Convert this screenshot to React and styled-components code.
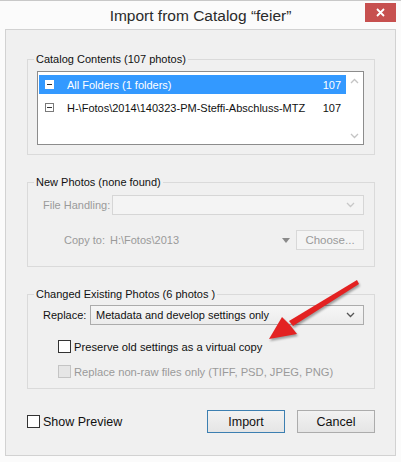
import React from "react";
import styled, { createGlobalStyle } from "styled-components";

const Global = createGlobalStyle`
    html, body {
        margin : 0;
        padding : 0;
        background : #fbfbfb;
    }
    body {
        font-family : "Liberation Sans", Arial, sans-serif;
        font-size : 11px;
        color : #000;
    }
`

const Window = styled.div`
    position : relative;
    width : 401px;
    height : 462px;
    box-sizing : border-box;
    border-top : 1px solid #c8c8c8;
    background : #fbfbfb;
    display : flex;
    flex-direction : column;
    overflow : hidden;
`

const TitleBar = styled.div`
    height : 28px;
    display : grid;
    grid-template-columns : 1fr auto 1fr;
    align-items : start;
`

const Title = styled.div`
    grid-column : 2;
    font-size : 15.5px;
    color : #2a2a2a;
    padding-top : 6px;
`

const Close = styled.div`
    grid-column : 3;
    justify-self : end;
    margin : 2px 5px 0 0;
    width : 31px;
    height : 19px;
    background : #c7504f;
    color : #fff;
    display : flex;
    align-items : center;
    justify-content : center;
`

const Client = styled.div`
    margin : 0 5px;
    height : 427px;
    box-sizing : border-box;
    border : 1px solid #d2d2d2;
    background : #f0f0f0;
    padding : 21px 20px 0 21px;
    display : flex;
    flex-direction : column;
`

const Group = styled.fieldset`
    margin : ${props => props.gap || 0}px 0 0 0;
    padding : 0 10px ${props => props.pb || 9}px 9px;
    border : 1px solid #dadada;
    min-width : 0;
`

const Legend = styled.legend`
    margin-left : -3px;
    padding : 0 2px;
    line-height : 16px;
    color : #111;
`

const ListBox = styled.div`
    margin-top : 4px;
    height : 74px;
    box-sizing : border-box;
    border : 1px solid #8c8c8c;
    background : #fff;
    display : flex;
`

const Rows = styled.div`
    flex : 1;
    min-width : 0;
    padding-top : 3px;
    display : flex;
    flex-direction : column;
    gap : 4px;
`

const Row = styled.div`
    height : 19px;
    margin-left : 1px;
    display : flex;
    align-items : center;
    background : ${props => props.selected ? "#3399ff" : "transparent"};
    color : ${props => props.selected ? "#fff" : "#111"};
    padding : 0 5px 0 6px;
`

const ToggleBox = styled.span`
    width : 9px;
    height : 9px;
    box-sizing : border-box;
    border : 1px solid ${props => props.selected ? "#fff" : "#7a7a7a"};
    background : #fff;
    display : flex;
    align-items : center;
    justify-content : center;
    margin-right : 13px;
    flex : none;
    &::after {
        content : "";
        width : 5px;
        height : 1px;
        background : #333;
    }
`

const RowLabel = styled.span`
    flex : 1;
    white-space : nowrap;
`

const Scroll = styled.div`
    width : 17px;
    flex : none;
    display : flex;
    flex-direction : column;
    justify-content : space-between;
    align-items : center;
    padding : 6px 0 5px;
`

const FieldRow = styled.div`
    display : flex;
    align-items : center;
    margin-top : ${props => props.mt || 0}px;
    padding-left : ${props => props.pl || 0}px;
    color : ${props => props.disabled ? "#9a9a9a" : "#111"};
    white-space : nowrap;
`

const FieldLabel = styled.span`
    width : ${props => props.w}px;
    flex : none;
`

const Select = styled.div`
    flex : 1;
    height : 20px;
    box-sizing : border-box;
    border : 1px solid ${props => props.disabled ? "#d6d6d6" : "#acacac"};
    background : ${props => props.disabled ? "#f4f4f4" : "linear-gradient(#f6f6f6, #ececec)"};
    display : flex;
    align-items : center;
    padding : 0 8px 0 5px;
    color : #111;
`

const SelectText = styled.span`
    flex : 1;
`

const CopyPath = styled.span`
    flex : 1;
    margin-left : 5px;
`

const Triangle = styled.span`
    width : 0;
    height : 0;
    border-left : 4px solid transparent;
    border-right : 4px solid transparent;
    border-top : 5px solid #8a8a8a;
    margin-right : 6px;
`

const Button = styled.div`
    width : ${props => props.w || 78}px;
    height : ${props => props.h || 23}px;
    box-sizing : border-box;
    margin-left : ${props => props.ml || 0}px;
    border : 1px solid ${props => props.primary ? "#3c7fb1" : props.disabled ? "#d8d8d8" : "#acacac"};
    background : ${props => props.disabled ? "#f4f4f4" : "linear-gradient(#f2f2f2, #e5e5e5)"};
    color : ${props => props.disabled ? "#9a9a9a" : "#111"};
    font-size : ${props => props.disabled ? 11.5 : 12.5}px;
    display : flex;
    align-items : center;
    justify-content : center;
`

const Check = styled.label`
    display : flex;
    align-items : center;
    margin-top : ${props => props.mt || 0}px;
    margin-left : ${props => props.ml || 0}px;
    color : ${props => props.disabled ? "#9a9a9a" : "#111"};
    font-size : ${props => props.big ? 12.5 : 11.2}px;
    white-space : nowrap;
`

const Box = styled.span`
    width : 13px;
    height : 13px;
    box-sizing : border-box;
    border : 1px solid ${props => props.disabled ? "#c4c4c4" : "#333"};
    background : ${props => props.disabled ? "#e6e6e6" : "#fff"};
    margin-right : 3px;
    flex : none;
`

const Footer = styled.div`
    margin-top : 21px;
    display : flex;
    align-items : center;
`

const Spacer = styled.div`
    flex : 1;
`

const Annotation = styled.svg`
    position : absolute;
    left : 0;
    top : 0;
    pointer-events : none;
    filter : drop-shadow(1px 2px 1px rgba(0,0,0,0.35));
`

const Chevron = ({ dir = "down", color = "#777" }) => (
    <svg width="9" height="6" viewBox="0 0 9 6">
        <path d={dir === "down" ? "M1 1 L4.5 4.5 L8 1" : "M1 5 L4.5 1.5 L8 5"} fill="none" stroke={color} strokeWidth="1.3" />
    </svg>
)

const App = () => {
    return (
        <>
            <Global />
            <Window>
                <TitleBar>
                    <Title>Import from Catalog “feier”</Title>
                    <Close>
                        <svg width="9" height="9" viewBox="0 0 9 9">
                            <path d="M1 1 L8 8 M8 1 L1 8" stroke="#fff" strokeWidth="1.8" />
                        </svg>
                    </Close>
                </TitleBar>
                <Client>
                    <Group>
                        <Legend>Catalog Contents (107 photos)</Legend>
                        <ListBox>
                            <Rows>
                                <Row selected>
                                    <ToggleBox selected />
                                    <RowLabel>All Folders (1 folders)</RowLabel>
                                    <span>107</span>
                                </Row>
                                <Row>
                                    <ToggleBox />
                                    <RowLabel>H-\Fotos\2014\140323-PM-Steffi-Abschluss-MTZ</RowLabel>
                                    <span>107</span>
                                </Row>
                            </Rows>
                            <Scroll>
                                <Chevron dir="up" color="#c4c4c4" />
                                <Chevron dir="down" color="#c4c4c4" />
                            </Scroll>
                        </ListBox>
                    </Group>

                    <Group gap={19} pb={16}>
                        <Legend>New Photos (none found)</Legend>
                        <FieldRow mt={5} pl={6} disabled>
                            <FieldLabel w={69}>File Handling:</FieldLabel>
                            <Select disabled>
                                <SelectText />
                                <Chevron color="#c8c8c8" />
                            </Select>
                        </FieldRow>
                        <FieldRow mt={15} pl={27} disabled>
                            <span>Copy to:</span>
                            <CopyPath>H:\Fotos\2013</CopyPath>
                            <Triangle />
                            <Button w={68} h={20} disabled>Choose...</Button>
                        </FieldRow>
                    </Group>

                    <Group gap={19} pb={10}>
                        <Legend>Changed Existing Photos (6 photos )</Legend>
                        <FieldRow mt={3} pl={6}>
                            <FieldLabel w={47}>Replace:</FieldLabel>
                            <Select>
                                <SelectText>Metadata and develop settings only</SelectText>
                                <Chevron color="#555" />
                            </Select>
                        </FieldRow>
                        <Check mt={15} ml={21}>
                            <Box />
                            Preserve old settings as a virtual copy
                        </Check>
                        <Check mt={12} ml={21} disabled>
                            <Box disabled />
                            Replace non-raw files only (TIFF, PSD, JPEG, PNG)
                        </Check>
                    </Group>

                    <Footer>
                        <Check big>
                            <Box />
                            Show Preview
                        </Check>
                        <Spacer />
                        <Button primary>Import</Button>
                        <Button ml={12}>Cancel</Button>
                    </Footer>
                </Client>
                <Annotation width="401" height="462" viewBox="0 0 401 462">
                    <polygon points="357,279 359,283 293,325 289,320" fill="#e32222" />
                    <polygon points="269,338 282,316 290,324 297,333" fill="#e32222" />
                </Annotation>
            </Window>
        </>
    )
}

export default App;
